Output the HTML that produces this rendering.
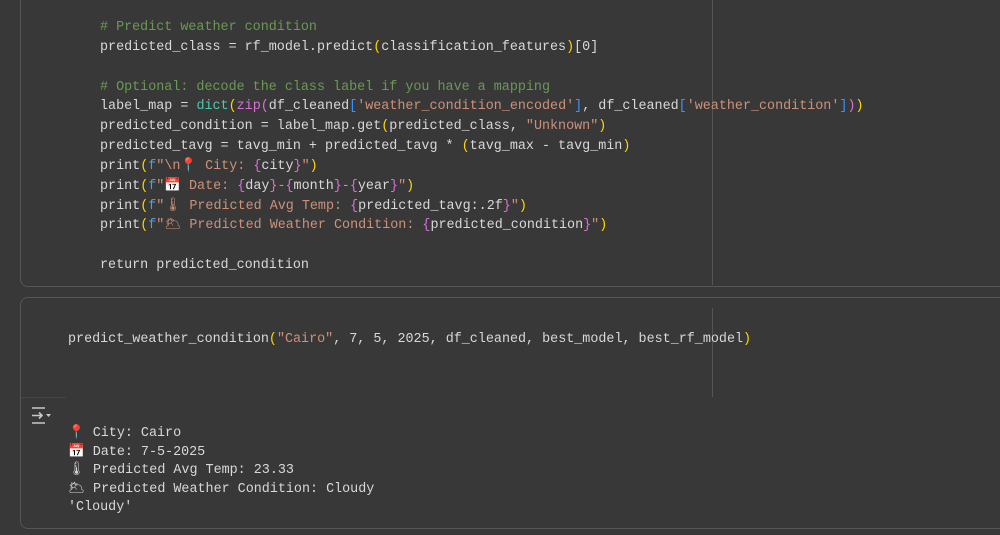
<!DOCTYPE html>
<html><head><meta charset="utf-8"><style>
body{margin:0;width:1000px;height:535px;background:#383838;overflow:hidden;position:relative;font-family:"Liberation Mono",monospace;font-size:13.4px;color:#d8d8d8}
.cell{position:absolute;left:20px;right:-10px;border:1px solid #555;border-radius:8px}
.code{position:absolute;white-space:pre;line-height:19.85px}
.c{color:#6a9955}.y{color:#ffd700}.t{color:#4ec9b0}.s{color:#ce9178}.b{color:#3794ff}.p{color:#da70d6}.f{color:#569cd6}.k{color:#c586c0}
.vl{position:absolute;left:712px;width:1px;background:#555}
.out{position:absolute;left:68px;top:425px;white-space:pre;line-height:18.6px;color:#d8d8d8}
</style></head><body>
<div class="cell" style="top:-10px;height:295px"></div>
<div class="vl" style="top:0;height:285px"></div>
<div class="code" style="left:100px;top:18px"><span class="c"># Predict weather condition</span>
predicted_class = rf_model.predict<span class="y">(</span>classification_features<span class="y">)</span>[0]

<span class="c"># Optional: decode the class label if you have a mapping</span>
label_map = <span class="t">dict</span><span class="y">(</span><span class="p">zip(</span>df_cleaned<span class="b">[</span><span class="s">'weather_condition_encoded'</span><span class="b">]</span>, df_cleaned<span class="b">[</span><span class="s">'weather_condition'</span><span class="b">]</span><span class="p">)</span><span class="y">)</span>
predicted_condition = label_map.get<span class="y">(</span>predicted_class, <span class="s">"Unknown"</span><span class="y">)</span>
predicted_tavg = tavg_min + predicted_tavg * <span class="y">(</span>tavg_max - tavg_min<span class="y">)</span>
print<span class="y">(</span><span class="f">f</span><span class="s">"\n📍 City: </span><span class="p">{</span>city<span class="p">}</span><span class="s">"</span><span class="y">)</span>
print<span class="y">(</span><span class="f">f</span><span class="s">"📅 Date: </span><span class="p">{</span>day<span class="p">}</span><span class="s">-</span><span class="p">{</span>month<span class="p">}</span><span class="s">-</span><span class="p">{</span>year<span class="p">}</span><span class="s">"</span><span class="y">)</span>
print<span class="y">(</span><span class="f">f</span><span class="s">"🌡 Predicted Avg Temp: </span><span class="p">{</span>predicted_tavg:.2f<span class="p">}</span><span class="s">"</span><span class="y">)</span>
print<span class="y">(</span><span class="f">f</span><span class="s">"🌥 Predicted Weather Condition: </span><span class="p">{</span>predicted_condition<span class="p">}</span><span class="s">"</span><span class="y">)</span>

return predicted_condition</div>
<div class="cell" style="top:297px;height:230px"></div>
<div class="vl" style="top:308px;height:89px"></div>
<div style="position:absolute;left:21px;top:397px;width:45px;height:1px;background:#444"></div>
<div class="code" style="left:68px;top:330px">predict_weather_condition<span class="y">(</span><span class="s">"Cairo"</span>, 7, 5, 2025, df_cleaned, best_model, best_rf_model<span class="y">)</span></div>
<svg style="position:absolute;left:30px;top:406px" width="22" height="20" viewBox="0 0 22 20" fill="none" stroke="#c8c8c8" stroke-width="1.6"><path d="M2 2h13M2 17h13M2 9.5h10M9 6.5l3 3-3 3"/><path d="M16 8h5l-2.5 3z" fill="#c8c8c8" stroke="none"/></svg>
<div class="out">📍 City: Cairo
📅 Date: 7-5-2025
🌡 Predicted Avg Temp: 23.33
🌥 Predicted Weather Condition: Cloudy
'Cloudy'</div>
</body></html>
